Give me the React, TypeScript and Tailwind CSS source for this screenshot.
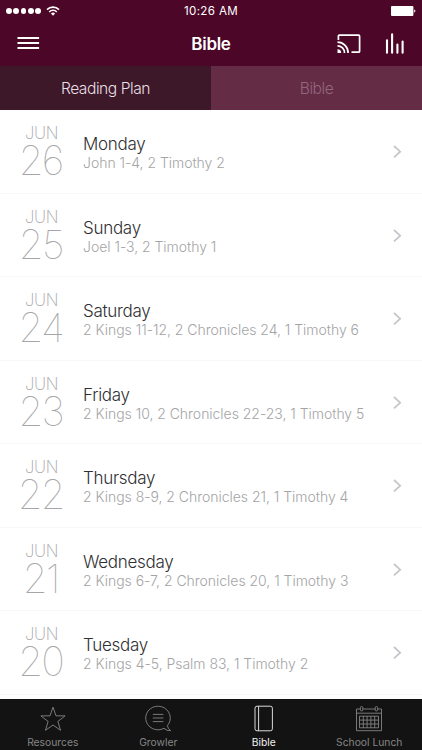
import type { ReactNode } from 'react'

type Reading = { day: string; weekday: string; passages: string }

const readings: Reading[] = [
  { day: '26', weekday: 'Monday', passages: 'John 1-4, 2 Timothy 2' },
  { day: '25', weekday: 'Sunday', passages: 'Joel 1-3, 2 Timothy 1' },
  { day: '24', weekday: 'Saturday', passages: '2 Kings 11-12, 2 Chronicles 24, 1 Timothy 6' },
  { day: '23', weekday: 'Friday', passages: '2 Kings 10, 2 Chronicles 22-23, 1 Timothy 5' },
  { day: '22', weekday: 'Thursday', passages: '2 Kings 8-9, 2 Chronicles 21, 1 Timothy 4' },
  { day: '21', weekday: 'Wednesday', passages: '2 Kings 6-7, 2 Chronicles 20, 1 Timothy 3' },
  { day: '20', weekday: 'Tuesday', passages: '2 Kings 4-5, Psalm 83, 1 Timothy 2' },
]

function StatusBar() {
  return (
    <div className="grid h-[22px] grid-cols-3 items-center pl-[6px] pr-[6px]">
      <div className="flex items-center gap-[1.4px]">
        {Array.from({ length: 5 }, (_, i) => (
          <span key={i} className="size-[5.9px] rounded-full bg-white" />
        ))}
        <svg className="ml-[4px]" width="14" height="10" viewBox="0 0 14 10" fill="none" stroke="#fff">
          <path d="M1 3.6a8.4 8.4 0 0 1 12 0" strokeWidth="1.6" />
          <path d="M3.2 5.9a5.3 5.3 0 0 1 7.6 0" strokeWidth="1.5" />
          <path d="M7 9.8 4.9 7.6a3 3 0 0 1 4.2 0Z" fill="#fff" stroke="none" />
        </svg>
      </div>
      <span className="pt-[2px] text-center text-[11.6px] leading-none tracking-[0.35px] text-white">10:26 AM</span>
      <svg className="justify-self-end" width="25" height="10" viewBox="0 0 25 10" fill="#fff">
        <rect width="22.4" height="10" rx="1" />
        <path d="M23.2 3.4c1.6.3 1.6 2.9 0 3.2Z" />
      </svg>
    </div>
  )
}

function NavBar() {
  return (
    <div className="grid h-[44px] grid-cols-3 items-center pl-[17px] pr-[17px]">
      <svg width="23" height="14" viewBox="0 0 23 14" stroke="#fff" strokeWidth="2">
        <path d="M.5 1h21.6M.5 6h21.6M.5 11h21.6" />
      </svg>
      <h1 className="text-center text-[17px] font-semibold leading-none tracking-[-0.3px] text-white">Bible</h1>
      <div className="flex items-center justify-end gap-[24px]">
        {/* Cast */}
        <svg width="24" height="20" viewBox="0 0 24 20" fill="none" stroke="#fff" strokeWidth="1.7">
          <path d="M1.4 6V2.2q0-1 1-1h19.2q1 0 1 1v15q0 1-1 1h-7.1" />
          <path d="M.5 8.2a10.6 10.6 0 0 1 10.6 10.8M.5 11.8a7 7 0 0 1 7 7.2" />
          <path d="M.5 15.3a3.7 3.7 0 0 1 3.7 3.7H.5Z" fill="#fff" stroke="none" />
        </svg>
        {/* Levels */}
        <svg width="20" height="22" viewBox="0 0 20 22" stroke="#fff" strokeWidth="2.1" strokeLinecap="round">
          <path d="M2 7.2v12.6M7.1 1.2v18.6M12.4 11.5v8.3M17.6 8.6v11.2" />
        </svg>
      </div>
    </div>
  )
}

function ReadingRow({ day, weekday, passages }: Reading) {
  return (
    <li className="flex h-[83.53px] shrink-0 border-b border-[#f7f7f7] pr-[20px]">
      <div className="w-[83px] shrink-0 pt-[13px] text-center">
        <div className="text-[16.6px] font-extralight leading-[20px] tracking-[-0.3px] text-[#a8a8aa]">JUN</div>
        <div className="pr-[1.5px] text-[40px] font-thin leading-[36px] tracking-[-1.8px] text-[#a6a6a8]">{day}</div>
      </div>
      <div className="min-w-0 flex-1 pt-[23px]">
        <div className="text-[17px] font-light leading-[22px] tracking-[-0.28px] text-[#303032]">{weekday}</div>
        <div className="mt-[-2px] whitespace-nowrap text-[14px] font-light leading-[20px] tracking-[-0.03px] text-[#a4a4a6]">{passages}</div>
      </div>
      <svg className="mt-[35px]" width="9" height="14" viewBox="0 0 9 14" fill="none" stroke="#c5c5ca" strokeWidth="1.7">
        <path d="m1 1 6.2 5.7L1 12.4" />
      </svg>
    </li>
  )
}

function TabItem({ label, active, children }: { label: string; active?: boolean; children: ReactNode }) {
  return (
    <div className={active ? 'flex flex-1 flex-col items-center text-[#f0f0f0]' : 'flex flex-1 flex-col items-center text-[#858585]'}>
      <svg width="28" height="28" viewBox="0 0 28 28" fill="none" stroke="currentColor" strokeWidth="0.9">
        {children}
      </svg>
      <span className="mt-[3px] whitespace-nowrap text-[10.3px] leading-[12px]">{label}</span>
    </div>
  )
}

export default function App() {
  return (
    <div className="flex h-[750px] w-[422px] flex-col overflow-hidden bg-white font-['Inter','Liberation_Sans',sans-serif]">
      <header className="shrink-0 bg-[#4c0627]">
        <StatusBar />
        <NavBar />
        <div className="flex h-[44px] text-center text-[15.6px] font-light leading-[45px] tracking-[-0.45px]">
          <div className="flex-1 bg-[#3c1829] text-[#e9dfe4]">Reading Plan</div>
          <div className="flex-1 bg-[#652c46] text-[#93687c]">Bible</div>
        </div>
      </header>

      <ul className="flex min-h-0 flex-1 flex-col overflow-hidden">
        {readings.map((r) => (
          <ReadingRow key={r.day} {...r} />
        ))}
      </ul>

      <nav className="flex h-[51px] shrink-0 bg-[#131313] pt-[6px]">
        <TabItem label="Resources">
          <path d="m14 2.2 3 8.6 9.1.1-7.2 5.5 2.6 8.9L14 20l-7.5 5.3 2.6-8.9-7.2-5.5 9.1-.1Z" />
        </TabItem>
        <TabItem label="Growler">
          <path d="M20 23.3A12.3 11.8 0 1 1 23.4 20.6q.3 2.9 3.2 5-3.8.6-6.6-2.3Z" />
          <path d="M8.8 9.4h10.6M8.8 13h10.6M8.8 16.6h10.6" />
        </TabItem>
        <TabItem label="Bible" active>
          <rect x="5" y="1.2" width="17.4" height="24.6" rx="2" />
          <path d="M8.6 1.2v24.6" />
        </TabItem>
        <TabItem label="School Lunch">
          <path d="M5.3 4H1.5v21.7h25V4h-3.8M7.7 4h12.6M1.5 8.2h25" />
          <rect x="5.4" y="1.5" width="2.4" height="4.5" rx="1.2" />
          <rect x="20.2" y="1.5" width="2.4" height="4.5" rx="1.2" />
          <path d="M4.5 11.2h19v11.6h-19ZM4.5 15.1h19M4.5 19h19M8.3 11.2v11.6M12.1 11.2v11.6M15.9 11.2v11.6M19.7 11.2v11.6" />
        </TabItem>
      </nav>
    </div>
  )
}
